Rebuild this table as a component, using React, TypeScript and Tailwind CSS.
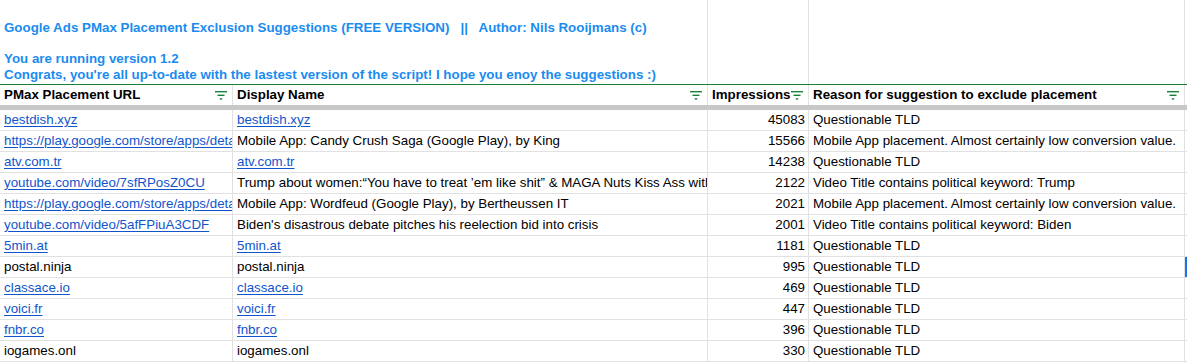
import React from 'react';

type Row = {
  url: string;
  urlLink: boolean;
  name: string;
  nameLink: boolean;
  impressions: number;
  reason: string;
};

const ROWS: Row[] = [
  { url: 'bestdish.xyz', urlLink: true, name: 'bestdish.xyz', nameLink: true, impressions: 45083, reason: 'Questionable TLD' },
  {
    url: 'https://play.google.com/store/apps/details?id=com.king.candycrushsaga',
    urlLink: true,
    name: 'Mobile App: Candy Crush Saga (Google Play), by King',
    nameLink: false,
    impressions: 15566,
    reason: 'Mobile App placement. Almost certainly low conversion value.',
  },
  { url: 'atv.com.tr', urlLink: true, name: 'atv.com.tr', nameLink: true, impressions: 14238, reason: 'Questionable TLD' },
  {
    url: 'youtube.com/video/7sfRPosZ0CU',
    urlLink: true,
    name: 'Trump about women:\u201cYou have to treat \u2019em like shit\u201d & MAGA Nuts Kiss Ass with Trump',
    nameLink: false,
    impressions: 2122,
    reason: 'Video Title contains political keyword: Trump',
  },
  {
    url: 'https://play.google.com/store/apps/details?id=nl.bertheussen.wordfeud',
    urlLink: true,
    name: 'Mobile App: Wordfeud (Google Play), by Bertheussen IT',
    nameLink: false,
    impressions: 2021,
    reason: 'Mobile App placement. Almost certainly low conversion value.',
  },
  {
    url: 'youtube.com/video/5afFPiuA3CDF',
    urlLink: true,
    name: "Biden's disastrous debate pitches his reelection bid into crisis",
    nameLink: false,
    impressions: 2001,
    reason: 'Video Title contains political keyword: Biden',
  },
  { url: '5min.at', urlLink: true, name: '5min.at', nameLink: true, impressions: 1181, reason: 'Questionable TLD' },
  { url: 'postal.ninja', urlLink: false, name: 'postal.ninja', nameLink: false, impressions: 995, reason: 'Questionable TLD' },
  { url: 'classace.io', urlLink: true, name: 'classace.io', nameLink: true, impressions: 469, reason: 'Questionable TLD' },
  { url: 'voici.fr', urlLink: true, name: 'voici.fr', nameLink: true, impressions: 447, reason: 'Questionable TLD' },
  { url: 'fnbr.co', urlLink: true, name: 'fnbr.co', nameLink: true, impressions: 396, reason: 'Questionable TLD' },
  { url: 'iogames.onl', urlLink: false, name: 'iogames.onl', nameLink: false, impressions: 330, reason: 'Questionable TLD' },
];

const GRID = 'grid grid-cols-[233px_475px_101px_376px_1fr]';

function FilterIcon() {
  return (
    <svg width="12" height="9" viewBox="0 0 12 9" className="shrink-0">
      <rect x="0" y="0" width="12" height="1.4" fill="#188038" />
      <rect x="2.5" y="3.6" width="7" height="1.4" fill="#188038" />
      <rect x="4.75" y="7.2" width="2.5" height="1.4" fill="#188038" />
    </svg>
  );
}

function HeaderCell({ label }: { label: string }) {
  return (
    <div className="flex items-center justify-between border-r border-[#e1e1e1] pl-[4px] pr-[5px] h-[20px] overflow-hidden">
      <span className="font-bold whitespace-nowrap">{label}</span>
      <FilterIcon />
    </div>
  );
}

function TextCell({ text, link }: { text: string; link: boolean }) {
  return (
    <div className="border-r border-[#e1e1e1] px-[4px] overflow-hidden whitespace-nowrap flex items-center">
      {link ? <span className="text-[#1155cc] underline underline-offset-[2px]">{text}</span> : <span>{text}</span>}
    </div>
  );
}

export default function App() {
  return (
    <div
      className="w-[1187px] h-[364px] overflow-hidden bg-white text-[13.33px] text-black"
      style={{ fontFamily: '"Liberation Sans", Arial, sans-serif' }}
    >
      {/* Title block */}
      <div className={`${GRID} h-[84px]`}>
        <div className="col-span-2 border-r border-[#e1e1e1] px-[4px] pb-[1px] flex flex-col justify-end font-bold text-[#1a8cf0] leading-[16px] whitespace-pre overflow-hidden">
          <div className="mb-[-1px]">Google Ads PMax Placement Exclusion Suggestions (FREE VERSION)   ||   Author: Nils Rooijmans (c)</div>
          <div>&nbsp;</div>
          <div>You are running version 1.2</div>
          <div>Congrats, you're all up-to-date with the lastest version of the script! I hope you enoy the suggestions :)</div>
        </div>
        <div className="border-r border-[#e1e1e1]" />
        <div className="border-r border-[#e1e1e1]" />
        <div />
      </div>

      {/* Header */}
      <div className={`${GRID} border-t border-[#188038] border-b-[5px] border-b-[#c8c8c8]`}>
        <HeaderCell label="PMax Placement URL" />
        <HeaderCell label="Display Name" />
        <HeaderCell label="Impressions" />
        <HeaderCell label="Reason for suggestion to exclude placement" />
        <div />
      </div>

      {/* Rows */}
      {ROWS.map((r, i) => (
        <div key={i} className={`${GRID} h-[21px] border-b border-[#e1e1e1]`}>
          <TextCell text={r.url} link={r.urlLink} />
          <TextCell text={r.name} link={r.nameLink} />
          <div className="border-r border-[#e1e1e1] px-[3px] flex items-center justify-end">{r.impressions}</div>
          <TextCell text={r.reason} link={false} />
          <div className={i === 7 ? 'shadow-[inset_2px_0_0_#1a73e8]' : ''} />
        </div>
      ))}
    </div>
  );
}
